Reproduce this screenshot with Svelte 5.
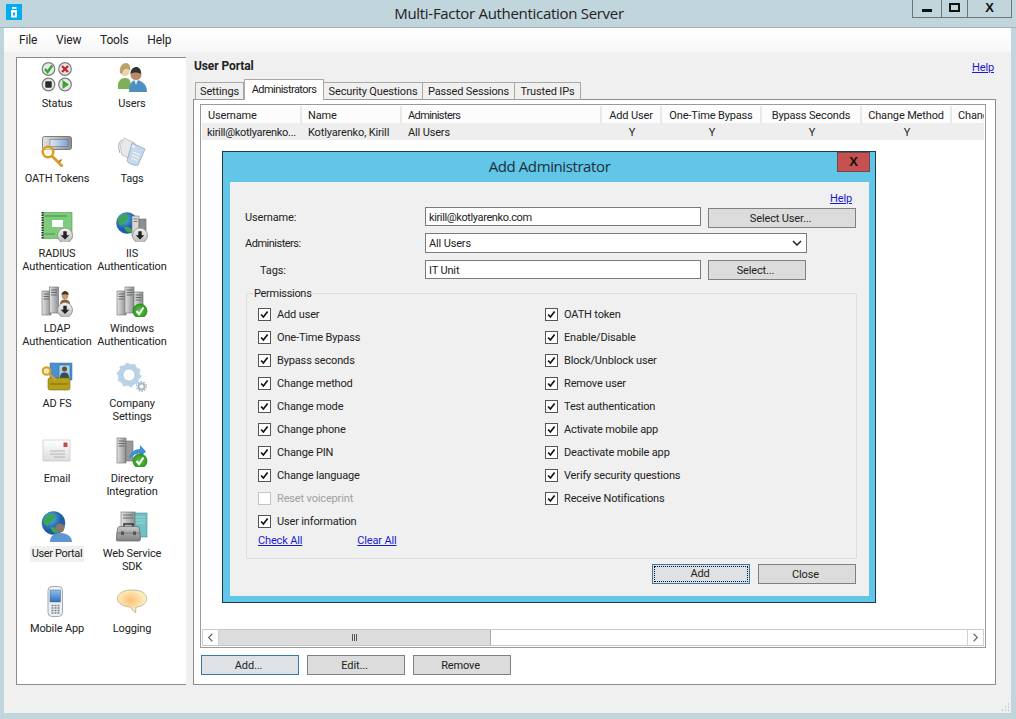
<script>
  const nav = [
    ['status', ['Status']], ['users', ['Users']],
    ['oath', ['OATH Tokens']], ['tags', ['Tags']],
    ['radius', ['RADIUS', 'Authentication']], ['iis', ['IIS', 'Authentication']],
    ['ldap', ['LDAP', 'Authentication']], ['windows', ['Windows', 'Authentication']],
    ['adfs', ['AD FS']], ['gears', ['Company', 'Settings']],
    ['email', ['Email']], ['directory', ['Directory', 'Integration']],
    ['portal', ['User Portal']], ['sdk', ['Web Service', 'SDK']],
    ['mobile', ['Mobile App']], ['logging', ['Logging']]
  ];
  const tabs = ['Settings', 'Administrators', 'Security Questions', 'Passed Sessions', 'Trusted IPs'];
  const columns = [
    ['Username', 100, 'l', 'kirill@kotlyarenko...'],
    ['Name', 100, 'l', 'Kotlyarenko, Kirill'],
    ['Administers', 200, 'l', 'All Users'],
    ['Add User', 60, 'c', 'Y'],
    ['One-Time Bypass', 100, 'c', 'Y'],
    ['Bypass Seconds', 100, 'c', 'Y'],
    ['Change Method', 90, 'c', 'Y'],
    ['Change Mode', 90, 'l', '']
  ];
  const left = ['Add user', 'One-Time Bypass', 'Bypass seconds', 'Change method', 'Change mode', 'Change phone', 'Change PIN', 'Change language', 'Reset voiceprint', 'User information'];
  const right = ['OATH token', 'Enable/Disable', 'Block/Unblock user', 'Remove user', 'Test authentication', 'Activate mobile app', 'Deactivate mobile app', 'Verify security questions', 'Receive Notifications'];
</script>

{#snippet server(x, y, h = 24)}
  <rect x={x} y={y} width="9" height={h} fill="url(#srv)" stroke="#6d6d6d" stroke-width=".6" />
  <path d="M{x + 1.5} {y + 3}h6M{x + 1.5} {y + 5.5}h6M{x + 1.5} {y + 8}h6" stroke="#555" stroke-width=".8" />
{/snippet}
{#snippet arrowBadge(cx = 24, cy = 25)}
  <circle cx={cx} cy={cy} r="7.5" fill="url(#badge)" stroke="#8a8a8a" stroke-width=".8" />
  <path d="M{cx - 1.7} {cy - 4.3}h3.4v4h2.6l-4.3 4.4-4.3-4.4h2.6z" fill="#222" />
{/snippet}
{#snippet checkBadge(cx = 24, cy = 26)}
  <circle cx={cx} cy={cy} r="7" fill="url(#greenb)" stroke="#2f7d1d" stroke-width=".8" />
  <path d="M{cx - 3.5} {cy}l2.5 3 4.5-6.5" fill="none" stroke="#fff" stroke-width="2" />
{/snippet}
{#snippet globe(cx, cy, r)}
  <circle cx={cx} cy={cy} r={r} fill="url(#sea)" stroke="#1f5f8d" stroke-width=".5" />
  <path d="M{cx - r * .7} {cy - r * .55}c{r * .5} {-r * .4} {r * .9} {-r * .3} {r * .8} {r * .1}c{-r * .1} {r * .4} {-r * .5} {r * .3} {-r * .6} {r * .7}c{-r * .3} {-r * .1} {-r * .5} {-r * .4} {-r * .2} {-r * .8}zM{cx - r * .3} {cy + r * .4}c{r * .4} {-r * .1} {r * .9} {r * .1} {r * .8} {r * .4}c{-r * .3} {r * .2} {-r * .6} {r * .1} {-r * .8} {-r * .4}z" fill="#3aa651" />
{/snippet}

{#snippet icon(k)}
  <svg class="ico" viewBox="0 0 32 32" aria-hidden="true">
    {#if k === 'status'}
      {#each [[7.5, 9], [24, 9], [7.5, 24.5], [24, 24.5]] as [x, y]}
        <circle cx={x} cy={y} r="6.3" fill="#e6e8e8" stroke="#7d7d7d" stroke-width="1.2" />
      {/each}
      <path d="M4 9l2.600 3 4.600-6.500" fill="none" stroke="#35a82c" stroke-width="2.400" />
      <path d="M21 6l6 6M27 6l-6 6" stroke="#c9242a" stroke-width="2.400" />
      <rect x="4.300" y="21.300" width="6.400" height="6.400" rx="1" fill="#2a2a2a" />
      <path d="M21.500 20v9l6.500-4.500z" fill="#3ba52e" />
    {:else if k === 'users'}
      <path d="M2 29c-1-7 2-11 7-11s6 3 6 11z" fill="#7fae58" />
      <circle cx="9" cy="11.500" r="4.500" fill="#ecd2ad" />
      <path d="M4 13c-1-7 3-10 6-10s5 3 4 8c-2-3-5-3-7 0l-1 3z" fill="#b9a266" />
      <path d="M13 32c0-8 3-12 7-12s11 3 11 12z" fill="#4d8fbe" />
      <circle cx="20" cy="14.500" r="5.500" fill="#b98a68" />
      <path d="M14.500 14c0-6 4-7 6-7s5 2 4.500 7c-3-2-8-2-10.500 0z" fill="#35312e" />
      <path d="M18 20l2 5 2-5z" fill="#dce9f0" />
    {:else if k === 'oath'}
      <rect x="1.500" y="1.500" width="29" height="13" rx="2" fill="url(#srv)" stroke="#666" stroke-width=".8" />
      <rect x="9" y="4.500" width="18" height="7" fill="url(#scr)" stroke="#666" stroke-width=".5" />
      <circle cx="7" cy="17" r="5.300" fill="#fdf3d3" fill-opacity=".55" stroke="#d99b25" stroke-width="2.400" />
      <path d="M11 21l10.500 10.500" stroke="#d99b25" stroke-width="2.800" />
      <path d="M18 27l2.500-2.500" stroke="#9a6a10" stroke-width="1.500" />
    {:else if k === 'tags'}
      <path d="M6 5c-4 2-4 8-2 13" fill="none" stroke="#a8a8a8" stroke-width="1" />
      <path d="M8 3l11 5-7 15-6-3-2-10z" fill="#e6e8ea" stroke="#b7bdc2" stroke-width=".8" />
      <path d="M16 8l13 6-7 16c-3 1-9-1-11-4z" fill="#c6d8ea" stroke="#8da7c1" stroke-width=".8" />
      <path d="M17 17l7 3M16 20l7 3M15 23l6 2.500" stroke="#f3f6f8" stroke-width="1.200" />
      <circle cx="17.500" cy="11.500" r="1.200" fill="#fff" />
    {:else if k === 'radius'}
      <rect x="2" y="2.500" width="29" height="26" fill="#7fcb7c" stroke="#4f9a51" stroke-width=".6" />
      <path d="M1.500 2v27" stroke="#1f2a20" stroke-width="2" stroke-dasharray="1.500 1" />
      <rect x="11" y="10" width="11" height="7" fill="#fff" />
      <path d="M4 6h22M4 24h10" stroke="#5fb060" stroke-width="2" />
      {@render arrowBadge(24, 25.500)}
    {:else if k === 'iis'}
      {@render globe(11, 13, 10.500)}
      <rect x="16" y="6" width="7" height="20" fill="#d5d7d9" stroke="#777" stroke-width=".6" />
      <rect x="23" y="9" width="7" height="14" fill="#8f8f8f" stroke="#666" stroke-width=".6" />
      <path d="M17.500 9h4M17.500 11.500h4" stroke="#666" stroke-width=".8" />
      {@render arrowBadge(24, 25.500)}
    {:else if k === 'ldap'}
      {@render server(1, 6, 24)}
      {@render server(8.500, 2, 26)}
      <circle cx="24" cy="11" r="3.300" fill="#c49a78" />
      <path d="M20.500 10c0-3 2.500-4 3.500-4s4 1 3.500 4c-2-1-5-1-7 0z" fill="#4a3526" />
      <path d="M19 19c0-3 2-4.500 5-4.500s5 1.500 5 4.500z" fill="#8a5c2e" />
      {@render arrowBadge(24, 25)}
    {:else if k === 'windows'}
      {@render server(1, 6, 24)}
      {@render server(9, 2, 26)}
      {@render server(18, 7, 18)}
      {@render checkBadge(24, 26)}
    {:else if k === 'adfs'}
      <rect x="9" y="3" width="22" height="17" fill="#4d90cf" stroke="#3a6c9e" stroke-width=".5" />
      <rect x="18" y="5" width="11" height="13" fill="#a7d3e8" stroke="#2b5a80" stroke-width=".5" />
      <circle cx="23.500" cy="9" r="2.500" fill="#6a4c36" />
      <path d="M19 18c0-4 1.500-5.500 4.500-5.500s4.500 1.500 4.500 5.500z" fill="#3a4c58" />
      <rect x="7" y="18" width="22" height="12" rx="2" fill="#b6a018" stroke="#7d6d0c" stroke-width=".6" />
      <path d="M9 24h18" stroke="#7d6d0c" stroke-width="1" />
      <circle cx="5.500" cy="11" r="3.800" fill="#f4e4b4" stroke="#d9a02b" stroke-width="2" />
      <path d="M8.500 14l6 6" stroke="#d9a02b" stroke-width="2.400" />
    {:else if k === 'gears'}
      <circle cx="13" cy="15" r="8.500" fill="none" stroke="#b9d2e6" stroke-width="5" />
      <circle cx="13" cy="15" r="11" fill="none" stroke="#b9d2e6" stroke-width="2.600" stroke-dasharray="3 3.900" />
      <circle cx="13" cy="15" r="6" fill="#fff" stroke="#a2bfd6" stroke-width=".7" />
      <circle cx="25.500" cy="26.500" r="3" fill="#fff" stroke="#a7b6c2" stroke-width="1.800" />
      <circle cx="25.500" cy="26.500" r="4.800" fill="none" stroke="#a7b6c2" stroke-width="1.400" stroke-dasharray="1.500 1.500" />
    {:else if k === 'email'}
      <path d="M2 5h27v21H2z" fill="url(#env)" stroke="#c6c6c6" stroke-width=".7" />
      <rect x="22.500" y="7.500" width="4" height="4.500" fill="#c8484c" />
      <path d="M9 16h15M9 19h15M13 22h11" stroke="#a8a8a8" stroke-width=".8" />
    {:else if k === 'directory'}
      {@render server(1, 3, 25)}
      <rect x="10" y="6" width="7" height="20" fill="#9a9a9a" stroke="#6d6d6d" stroke-width=".6" />
      <path d="M13 25c0-7 5-11 11-11v-4l6 6.500-6 6v-4c-4 0-8 2-11 6.500z" fill="#3d8fd6" />
      {@render checkBadge(24, 26)}
    {:else if k === 'portal'}
      {@render globe(12.500, 13, 11.500)}
      <circle cx="19" cy="18" r="4.500" fill="#8a7668" />
      <path d="M9 32c0-6 4-9 10-9s12 3 12 9z" fill="#5e96d2" />
    {:else if k === 'sdk'}
      <rect x="17" y="3" width="14" height="24" fill="#6fc1c3" stroke="#4a8d90" stroke-width=".6" />
      <path d="M19 7h10M19 10h10M19 13h10" stroke="#9ad9da" stroke-width="1" />
      <rect x="5" y="2" width="14" height="16" fill="url(#srv)" stroke="#6d6d6d" stroke-width=".6" />
      <path d="M7 5h10M7 8h10" stroke="#555" stroke-width=".8" />
      <path d="M8 17v-3h9v3" fill="none" stroke="#333" stroke-width="1.500" />
      <path d="M1.500 19c0-1.500 1-2.500 2.500-2.500h17c1.500 0 2.500 1 2.500 2.500l1 10c0 1.500-1 2-2 2H2c-1 0-2-.5-2-2z" fill="url(#case)" stroke="#666" stroke-width=".7" />
      <path d="M1 23h23" stroke="#6d6d6d" stroke-width=".8" />
      <rect x="5" y="21.500" width="3" height="3.500" fill="#555" />
      <rect x="17" y="21.500" width="3" height="3.500" fill="#555" />
    {:else if k === 'mobile'}
      <rect x="7" y="1.500" width="14.500" height="30" rx="4" fill="#eef0f2" stroke="#9aa0a6" stroke-width=".9" />
      <rect x="9" y="5" width="10.500" height="12" fill="url(#scr2)" stroke="#44688a" stroke-width=".5" />
      <path d="M10.500 20.500h2M13.500 20.500h2M16.500 20.500h2M10.500 23h2M13.500 23h2M16.500 23h2M10.500 25.500h2M13.500 25.500h2M16.500 25.500h2M10.500 28h2M13.500 28h2M16.500 28h2" stroke="#7a7f85" stroke-width="1.300" />
    {:else if k === 'logging'}
      <path d="M16 5c8 0 14.500 2.500 14.500 8.500S24 22 20 22l-.5 6-5.500-6C8 21.500 1.500 19 1.500 13.500S8 5 16 5z" fill="url(#bub)" stroke="#b3ad9b" stroke-width=".8" />
    {/if}
  </svg>
{/snippet}

{#snippet check(on = true, off = false)}
  <span class="box" class:off>
    {#if on}
      <svg viewBox="0 0 13 13" aria-hidden="true"><path d="M2.500 6.500l2.700 3 5-6.500" fill="none" stroke="#111" stroke-width="2" /></svg>
    {/if}
  </span>
{/snippet}

<svg class="defs" aria-hidden="true">
  <defs>
    <linearGradient id="srv" x1="0" y1="0" x2="1" y2="0"><stop offset="0" stop-color="#e2e3e4" /><stop offset="1" stop-color="#8c8e90" /></linearGradient>
    <linearGradient id="badge" x1="0" y1="0" x2="0" y2="1"><stop offset="0" stop-color="#f4f4f4" /><stop offset="1" stop-color="#b9b9b9" /></linearGradient>
    <radialGradient id="greenb"><stop offset="0" stop-color="#62c640" /><stop offset="1" stop-color="#2d9a22" /></radialGradient>
    <radialGradient id="sea" cx=".35" cy=".3"><stop offset="0" stop-color="#62b7e8" /><stop offset="1" stop-color="#1a5ea6" /></radialGradient>
    <linearGradient id="scr" x1="0" y1="0" x2="1" y2="0"><stop offset="0" stop-color="#dfe9f6" /><stop offset="1" stop-color="#7fa3d8" /></linearGradient>
    <linearGradient id="scr2" x1="0" y1="0" x2="0" y2="1"><stop offset="0" stop-color="#8fc0ee" /><stop offset="1" stop-color="#2f6fc0" /></linearGradient>
    <linearGradient id="env" x1="0" y1="0" x2="0" y2="1"><stop offset="0" stop-color="#ffffff" /><stop offset="1" stop-color="#dcdcdc" /></linearGradient>
    <linearGradient id="case" x1="0" y1="0" x2="0" y2="1"><stop offset="0" stop-color="#c5c7c9" /><stop offset="1" stop-color="#7f8183" /></linearGradient>
    <radialGradient id="bub" cx=".45" cy=".45"><stop offset="0" stop-color="#fbc078" /><stop offset="1" stop-color="#fdf0bc" /></radialGradient>
  </defs>
</svg>

<div class="screen">
  <header class="titlebar">
    <div class="logo">
      <svg viewBox="0 0 16 16" aria-hidden="true"><path d="M6 3h4.500v2H6zM5 6h6v7.500H5z" fill="#fff" /><rect x="7" y="8.500" width="2" height="3" fill="#00aeef" /></svg>
    </div>
    <div class="title">Multi-Factor Authentication Server</div>
    <div class="controls">
      <span class="ctl min"><i></i></span>
      <span class="ctl max"><i></i></span>
      <span class="ctl cls">X</span>
    </div>
  </header>

  <div class="window">
    <nav class="menu">
      <span>File</span><span>View</span><span>Tools</span><span>Help</span>
    </nav>

    <div class="content">
      <aside class="side">
        {#each nav as [key, lines]}
          <div class="nav-item">
            {@render icon(key)}
            <div class="nav-label" class:sel={key === 'portal'}>
              {#each lines as l}<div>{l}</div>{/each}
            </div>
          </div>
        {/each}
      </aside>

      <section class="main">
        <div class="main-head">
          <b>User Portal</b>
          <a href="#help" class="lnk">Help</a>
        </div>
        <div class="tabs">
          {#each tabs as t, i}
            <span class="tab" class:active={i === 1} style="width:{[49, 80, 99, 92, 66][i]}px">{t}</span>
          {/each}
        </div>

        <div class="panel">
          <div class="list">
            <div class="list-row head">
              {#each columns as [name, w, al]}
                <span class="cell {al}" style="width:{w}px">{name}</span>
              {/each}
            </div>
            <div class="list-row body">
              {#each columns as [, w, al, val]}
                <span class="cell {al}" style="width:{w}px">{val}</span>
              {/each}
            </div>
            <div class="spacer"></div>
            <div class="scroll">
              <span class="arrow"><svg viewBox="0 0 16 16" aria-hidden="true"><path d="M10 4L6 8l4 4" fill="none" stroke="#666" stroke-width="1.200" /></svg></span>
              <span class="thumb"><i></i><i></i><i></i></span>
              <span class="track"></span>
              <span class="arrow"><svg viewBox="0 0 16 16" aria-hidden="true"><path d="M6 4l4 4-4 4" fill="none" stroke="#666" stroke-width="1.200" /></svg></span>
            </div>
          </div>

          <div class="actions">
            <button class="btn primary">Add...</button>
            <button class="btn">Edit...</button>
            <button class="btn">Remove</button>
          </div>

          <div class="dialog">
            <div class="dlg-title">
              <span>Add Administrator</span>
              <span class="dlg-x">X</span>
            </div>
            <div class="dlg-body">
              <div class="dlg-help"><a href="#help" class="lnk">Help</a></div>
              <div class="form">
                <label class="lab">Username:</label>
                <span class="inp user">kirill@kotlyarenko.com</span>
                <button class="btn wide">Select User...</button>

                <label class="lab up">Administers:</label>
                <span class="inp combo">
                  All Users
                  <svg viewBox="0 0 10 6" aria-hidden="true"><path d="M1 1l4 4 4-4" fill="none" stroke="#222" stroke-width="1.500" /></svg>
                </span>

                <label class="lab tag">Tags:</label>
                <span class="inp">IT Unit</span>
                <button class="btn">Select...</button>
              </div>

              <fieldset class="perm">
                <legend>Permissions</legend>
                <div class="perm-cols">
                  <div>
                    {#each left as l}
                      <div class="chk" class:dis={l === 'Reset voiceprint'}>
                        {@render check(l !== 'Reset voiceprint', l === 'Reset voiceprint')}
                        <span>{l}</span>
                      </div>
                    {/each}
                    <div class="links">
                      <a href="#all" class="lnk">Check All</a>
                      <a href="#none" class="lnk">Clear All</a>
                    </div>
                  </div>
                  <div>
                    {#each right as l}
                      <div class="chk">{@render check()}<span>{l}</span></div>
                    {/each}
                  </div>
                </div>
              </fieldset>

              <div class="dlg-actions">
                <button class="btn primary focus"><span>Add</span></button>
                <button class="btn">Close</button>
              </div>
            </div>
          </div>
        </div>
      </section>
    </div>

    <svg class="grip" viewBox="0 0 10 10" aria-hidden="true">
      <path d="M8 2h1M5 5h1M8 5h1M2 8h1M5 8h1M8 8h1" stroke="#aaa" stroke-width="1" />
    </svg>
  </div>
</div>

<style>
  :global(body) { margin: 0; background: #c1d5dc; }
  .defs { width: 0; height: 0; display: block; }
  .screen {
    width: 1016px; height: 719px; display: flex; flex-direction: column;
    font: 11px/13px Roboto, "Liberation Sans", sans-serif; letter-spacing: -0.15px; color: #222; overflow: hidden;
  }
  .titlebar { height: 28px; display: grid; grid-template-columns: 1fr auto 1fr; box-sizing: border-box; padding: 0 4px 0 6px; flex: none; border-bottom: 1px solid #a4b2b8; }
  .logo { width: 16px; height: 16px; margin-top: 4px; background: #00aeef; }
  .logo svg { width: 16px; height: 16px; display: block; }
  .title { font: 15px/27px "Open Sans", sans-serif; letter-spacing: -0.3px; color: #222; }
  .controls { justify-self: end; display: flex; height: 18px; border: 1px solid #6c7478; border-top: 0; box-sizing: border-box; width: 100px; }
  .ctl { display: flex; align-items: center; justify-content: center; border-left: 1px solid #6c7478; box-sizing: border-box; }
  .min { width: 28px; border-left: 0; }
  .max { width: 26px; }
  .cls { flex: 1; font: 700 13px/1 "Liberation Sans", sans-serif; color: #111; padding-bottom: 2px; }
  .min i { width: 10px; height: 3px; background: #111; margin-top: 3px; }
  .max i { width: 7px; height: 5px; border: 2px solid #111; margin-top: -3px; }

  .window { margin: 0 5px 0 4px; height: 685px; background: #f0f0f0; display: flex; flex-direction: column; flex: none; position: relative; }
  .menu { height: 24px; display: flex; align-items: center; background: linear-gradient(#fff, #f7f7f7); font: 12px/24px Roboto, sans-serif; padding-left: 15px; gap: 18.7px; flex: none; }
  .content { display: flex; flex: 1; padding: 5px 15px 28px 12px; gap: 7px; min-height: 0; }

  .side { width: 170px; box-sizing: border-box; background: #fff; border: 1px solid #8c8c8c; border-right: 0; display: grid; grid-template-columns: 75px 75px; grid-auto-rows: 75px; padding: 0 0 0 2.5px; align-content: start; }
  .nav-item { display: flex; flex-direction: column; align-items: center; padding-top: 2px; box-sizing: border-box; }
  .ico { width: 32px; height: 32px; display: block; flex: none; }
  .nav-label { text-align: center; margin-top: 5px; white-space: nowrap; }
  .nav-label.sel { background: #f0f0f0; padding: 1px 2px 2px; margin-top: 4px; letter-spacing: -0.35px; }

  .main { width: 803px; display: flex; flex-direction: column; position: relative; }
  .main-head { height: 22px; display: flex; justify-content: space-between; align-items: flex-start; padding: 3px 2px 0 1px; box-sizing: border-box; }
  .main-head b { font-weight: 700; font-size: 12px; letter-spacing: -0.1px; }
  .main-head .lnk { margin-top: 1px; }
  .lnk { color: #1a1ad0; text-decoration: underline; }
  .tabs { display: flex; height: 21px; padding-left: 2px; position: relative; z-index: 1; align-items: flex-end; }
  .tab { height: 18px; box-sizing: border-box; border: 1px solid #a8a8a8; border-bottom: 1px solid #9a9a9a; border-left: 0; background: #f0f0f0; text-align: center; line-height: 17px; white-space: nowrap; }
  .tab:first-child { border-left: 1px solid #a8a8a8; }
  .tab.active { height: 21px; background: #fff; border: 1px solid #a8a8a8; border-bottom: 0; line-height: 19px; letter-spacing: -0.55px; }

  .panel { flex: 1; margin-top: -1px; background: #fff; border: 1px solid #8c8c8c; box-sizing: border-box; padding: 4px 9px 0 6px; display: flex; flex-direction: column; position: relative; }
  .list { height: 544px; border: 1px solid #9a9a9a; box-sizing: border-box; padding: 1px; display: flex; flex-direction: column; overflow: hidden; }
  .list-row { display: flex; flex: none; overflow: hidden; }
  .cell { flex: none; box-sizing: border-box; white-space: nowrap; height: 17px; line-height: 19px; }
  .cell.l { padding-left: 6px; }
  .cell.c { text-align: center; }
  .head .cell { border-right: 2px solid #e9e9e9; background: #fcfcfc; }
  .head .cell:nth-child(3) { letter-spacing: -0.6px; }
  .body { background: #eeeeee; }
  .body .cell.l:first-child { padding-left: 5px; letter-spacing: -0.3px; }
  .spacer { flex: 1; }
  .scroll { height: 17px; display: flex; flex: none; border-top: 1px solid #c8c8c8; border-bottom: 1px solid #c8c8c8; box-sizing: border-box; }
  .arrow { width: 17px; flex: none; box-sizing: border-box; border-left: 1px solid #d0d0d0; border-right: 1px solid #d0d0d0; display: flex; align-items: center; justify-content: center; }
  .arrow svg { width: 15px; height: 15px; }
  .thumb { width: 272px; background: #dcdcdc; border-right: 1px solid #aaa; box-sizing: border-box; display: flex; align-items: center; justify-content: center; gap: 1px; }
  .thumb i { width: 1px; height: 7px; background: #555; }
  .track { flex: 1; }

  .actions { display: flex; gap: 8px; padding-left: 1px; margin-top: 7px; }
  .btn { width: 98px; height: 20px; background: #dcdcdc; border: 1px solid #808080; border-radius: 0; padding: 0 3px 0 0; font: inherit; letter-spacing: inherit; color: #222; }
  .btn.primary { border-color: #3a78a8; background: #dfe2e4; }
  .btn.wide { width: 148px; margin-top: 1px; }
  .btn.focus { padding: 1px; }
  .btn.focus span { display: block; height: 100%; border: 1px dotted #111; box-sizing: border-box; line-height: 14px; padding-right: 2px; }

  .dialog { position: absolute; left: 28px; top: 51px; width: 654px; height: 452px; box-sizing: border-box; background: #62c6e8; border: 1px solid #1b3a4e; display: flex; flex-direction: column; padding: 0 6px 6px 7px; }
  .dlg-title { height: 30px; flex: none; position: relative; text-align: center; font: 15px/29px "Open Sans", sans-serif; letter-spacing: -0.4px; color: #1d2f38; }
  .dlg-x { position: absolute; right: -1px; top: 0; width: 33px; height: 20px; background: #c75050; border: 1px solid #6a4a4a; box-sizing: border-box; font: 700 13px/17px "Liberation Sans", sans-serif; color: #111; letter-spacing: 0; }
  .dlg-body { flex: 1; background: #f0f0f0; padding: 9px 13px 0 15px; display: flex; flex-direction: column; min-height: 0; }
  .dlg-help { text-align: right; height: 16px; padding: 1px 4px 0 0; box-sizing: border-box; }
  .form { display: grid; grid-template-columns: 180px 283px auto; grid-template-rows: 26px 27px 27px; justify-items: start; }
  .lab { line-height: 22px; }
  .lab.up { grid-column: 1; letter-spacing: -0.5px; }
  .lab.tag { padding-left: 15px; }
  .inp { width: 276px; height: 19px; box-sizing: border-box; background: #fff; border: 1px solid #7a7a7a; line-height: 19px; padding-left: 3px; font-size: 11px; }
  .inp.user { letter-spacing: -0.38px; }
  .inp.combo { width: 382px; height: 20px; grid-column: 2 / 4; display: flex; align-items: center; justify-content: space-between; padding: 0 4px 0 3px; }
  .inp.combo svg { width: 10px; height: 6px; }

  .perm { margin: 0 0 0 1px; padding: 0 0 0 11px; border: 1px solid #dcdcdc; border-radius: 2px; height: 272px; box-sizing: border-box; width: 611px; }
  .perm legend { padding: 0; margin-left: -4px; line-height: 13px; letter-spacing: -0.3px; }
  .perm-cols { display: grid; grid-template-columns: 287px 1fr; padding-top: 3px; }
  .chk { height: 23px; display: flex; align-items: center; gap: 6px; white-space: nowrap; }
  .chk.dis { color: #a0a0a0; }
  .box { width: 13px; height: 13px; box-sizing: border-box; background: #fff; border: 1px solid #555; display: block; flex: none; }
  .box.off { border-color: #c4c4c4; }
  .box svg { display: block; width: 11px; height: 11px; }
  .links { display: flex; gap: 55px; padding-top: 1px; }
  .dlg-actions { display: flex; gap: 8px; justify-content: flex-end; margin-top: 5px; }
  .grip { position: absolute; right: 1px; bottom: 1px; width: 10px; height: 10px; }
</style>
